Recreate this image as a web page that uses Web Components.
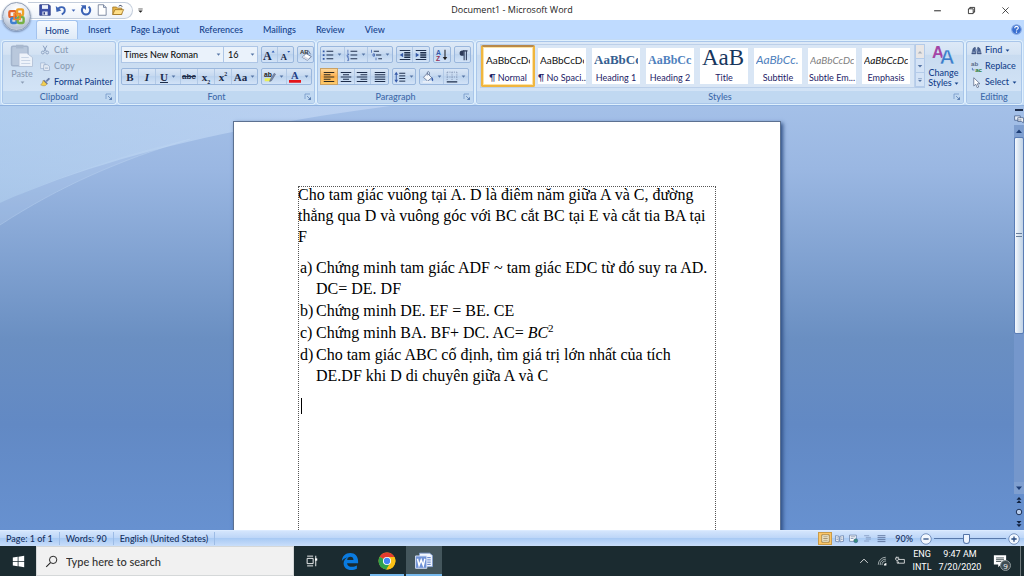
<!DOCTYPE html>
<html lang="en">
<head>
<meta charset="utf-8">
<meta name="viewport" content="width=device-width, initial-scale=1">
<title>Document1 - Microsoft Word</title>
<style>
html, body { margin: 0; height: 100%; }
body { font-family: Lato, "Open Sans", sans-serif; font-size: 9px; font-weight: 500; color: #15428b; overflow: hidden; }
</style>
</head>
<body>
<word-app></word-app>
<script>
const define = (name, html, setup) => {
  const tpl = document.createElement('template');
  tpl.innerHTML = '<style>*{box-sizing:border-box}button,select,input{font:inherit;color:inherit;margin:0}</style>' + html;
  customElements.define(name, class extends HTMLElement {
    constructor() {
      super();
      this.attachShadow({ mode: 'open' }).append(tpl.content.cloneNode(true));
    }
    connectedCallback() { if (setup) setup(this, this.shadowRoot); }
  });
};

/* ---------- icon set, every drawing on a 16 unit grid ---------- */
const lines = (ys, x1, x2, c = '#1c2c4a', w = 1.3) => ys.map((y, i) =>
  `<path d="M${Array.isArray(x1) ? x1[i] : x1} ${y}H${Array.isArray(x2) ? x2[i] : x2}" stroke="${c}" stroke-width="${w}"/>`).join('');
const ICONS = {
  save: '<path d="M1 1h12.500L15 2.500V15H1z" fill="#3f51a8" stroke="#27357c"/><path d="M4 1.500h8v5H4z" fill="#eef2fb"/><path d="M4.500 10h7v5h-7z" fill="#dfe4f2"/><path d="M6 11h2v3H6z" fill="#27357c"/>',
  undo: '<path d="M3.500 8C5 3.500 12 2.500 13 7.500c.6 3-1.500 5-4 6.500" fill="none" stroke="#3c63b5" stroke-width="2.400"/><path d="M1 2.500l1 8 6.500-2z" fill="#3c63b5"/>',
  redo: '<path d="M5 3.500C.5 7 2.500 14 8 14s7.500-7 3.500-10.500" fill="none" stroke="#3c63b5" stroke-width="2.600"/><path d="M1 1.500h7V8z" fill="#3c63b5"/>',
  page: '<path d="M3 1h7l3.500 3.500V15H3z" fill="#fff" stroke="#5c6b88"/><path d="M10 1v3.500h3.500" fill="#d5deee" stroke="#5c6b88"/>',
  open: '<path d="M1 4h5l1.500 1.500H13V14H1z" fill="#e8b64a" stroke="#9a6f1f"/><path d="M1 14l3-6.500h11.500L12.500 14z" fill="#ffe08a" stroke="#9a6f1f"/><path d="M9 3c2-2 4-1 4.500.5" fill="none" stroke="#35415f" stroke-width="1.300"/>',
  paste: '<rect x="1" y="1.500" width="11" height="13" rx="1" fill="#b9c8dc" stroke="#a3b4cc"/><rect x="4" y=".5" width="5" height="2.500" fill="#a9b9cf"/><path d="M6 6h5l4 3v6H6z" fill="#eef3fa" stroke="#b3c2d8" stroke-width=".6"/><path d="M7.500 9h5M7.500 11h6M7.500 13h6" stroke="#c9d5e6" stroke-width=".7"/>',
  cut: '<path d="M5 1l5 9M11 1L6.500 10" stroke="#8ba0c0" stroke-width="1.600"/><circle cx="4.500" cy="12" r="2.300" fill="none" stroke="#8ba0c0" stroke-width="1.500"/><circle cx="11.500" cy="12" r="2.300" fill="none" stroke="#8ba0c0" stroke-width="1.500"/>',
  copy: '<path d="M1 3h7v9H1z" fill="#e3ebf6" stroke="#9bafcb"/><path d="M6 6h6l3 3v6H6z" fill="#eef3fa" stroke="#8399ba"/><path d="M8 10h5M8 12h5" stroke="#9bafcb"/>',
  painter: '<path d="M9.500 6L14 1.500l1.500 1.500L11 7.500z" fill="#6b7fae" stroke="#3a4a75" stroke-width=".6"/><path d="M6.500 4.500l6 6-1.500 1.500-6-6z" fill="#5b6da3"/><path d="M5 5.500l6 6c-2 3-6 3.500-10 1 2.500-1 3-4 4-7z" fill="#f2cf52" stroke="#a27a1c" stroke-width=".7"/>',
  grow: '<text x="0" y="14" font-family="Liberation Serif" font-weight="bold" font-size="16" fill="#1c2c4a">A</text><path d="M11.500 4.500L13.500 2l2 2.500z" fill="#2c5bb5"/>',
  shrink: '<text x="2" y="14" font-family="Liberation Serif" font-weight="bold" font-size="12" fill="#1c2c4a">A</text><path d="M11 2.500h4L13 5z" fill="#2c5bb5"/>',
  clear: '<text x="0" y="7" font-family="Liberation Sans" font-weight="bold" font-size="8" fill="#333">AB</text><path d="M3 11l5-5 7 4-5 5z" fill="#fff" stroke="#4a5b80"/><path d="M3 11l2-2 7 4-2 2z" fill="#d7dbe8"/><path d="M11 2l3 5" stroke="#4a5b80"/>',
  marker: '<text x="0" y="8" font-family="Liberation Sans" font-weight="bold" font-size="9" fill="#222">ab</text><path d="M1 9.500h8v4H1z" fill="#e9ee55"/><path d="M8 12l5.500-9 2 1.200L10 13l-2.500 1z" fill="#7c8aa8" stroke="#3c4869" stroke-width=".5"/>',
  fontcolor: '<text x="2.500" y="11" font-family="Liberation Serif" font-weight="bold" font-size="14" fill="#1f3f86">A</text><path d="M0 12h16v3.500H0z" fill="#e3151b"/>',
  bullets: lines([3, 8, 13], 6, 15) + '<path d="M1 2h2.400v2.400H1zM1 7h2.400v2.400H1zM1 12h2.400v2.400H1z" fill="#3559a8"/>',
  numbers: lines([3, 8, 13], 6, 15) + '<path d="M2.500 1v4M1.500 6.500h2v1.500h-2v2h2M1.500 11.500h2v4h-2M2 13.500h1.500" fill="none" stroke="#3559a8" stroke-width=".9"/>',
  multi: lines([3, 8, 13], [5, 8, 11], [12, 15, 16]) + '<path d="M2 1v4M4 6.500h2v3H4zM8 11.500v3.500" fill="none" stroke="#3559a8"/>',
  outdent: lines([2, 14], 1, 15) + lines([5, 8, 11], 7, 15, '#1c2c4a', 1.7) + '<path d="M5.500 5v6L1 8z" fill="#3559a8"/>',
  indent: lines([2, 14], 1, 15) + lines([5, 8, 11], 7, 15, '#1c2c4a', 1.7) + '<path d="M1 5v6l4.500-3z" fill="#3559a8"/>',
  sort: '<text x="0" y="7.500" font-family="Liberation Sans" font-weight="bold" font-size="9" fill="#3559a8">A</text><text x="0" y="16" font-family="Liberation Sans" font-weight="bold" font-size="9" fill="#963055">Z</text><path d="M12 1v12" stroke="#222" stroke-width="1.400"/><path d="M9 10.500h6L12 15z" fill="#222"/>',
  pilcrow: '<path d="M8 2.500h6M9.500 2.500V15M12.500 2.500V15" stroke="#2c3a58" stroke-width="1.400" fill="none"/><path d="M9 2H7a3.500 3.500 0 0 0 0 7h2z" fill="#2c3a58"/>',
  left: lines([2, 5, 8, 11, 14], 1, [15, 10, 15, 10, 15], '#2d2a20', 1.6),
  center: lines([2, 5, 8, 11, 14], [1, 4, 1, 4, 1], [15, 12, 15, 12, 15], '#1c2c4a', 1.6),
  right: lines([2, 5, 8, 11, 14], [1, 6, 1, 6, 1], 15, '#1c2c4a', 1.6),
  justify: lines([2, 5, 8, 11, 14], 1, 15, '#1c2c4a', 1.6),
  spacing: lines([3, 6.500, 10, 13.500], 7, 15, '#1c2c4a', 1.3) + '<path d="M3 4v9" stroke="#3559a8" stroke-width="1.300"/><path d="M.5 5L3 1l2.500 4zM.5 11.500L3 15.500l2.500-4z" fill="#3559a8"/>',
  bucket: '<path d="M7 3l6 6-5.500 4.500L2 8.500z" fill="#f4f7fc" stroke="#57688c"/><path d="M7 6V2.500C7 0 10 0 10 3v2" fill="none" stroke="#57688c"/><path d="M13 8c2 2 2.500 4 1.500 5.500-2-.5-2-3-1.500-5.500z" fill="#3559a8"/><path d="M1 14.500h12" stroke="#e9eff8" stroke-width="2.500"/>',
  borders: '<path d="M1.500 1.500h13M1.500 8h13M1.500 1.500v12M8 1.500v12M14.500 1.500v12" stroke="#7587a8" stroke-dasharray="1.500 1.500" fill="none"/><path d="M1 14.500h14" stroke="#1c2c4a" stroke-width="1.500"/>',
  styles: '<text x="0" y="9" font-family="Liberation Sans" font-weight="bold" font-size="11" fill="#a445a6">A</text><text x="5" y="13" font-family="Liberation Sans" font-weight="bold" font-size="14" fill="#3d7cc9" stroke="#dcebfb" stroke-width=".3">A</text>',
  find: '<path d="M1 13l2-8 3-2 1 4v6zM15 13l-2-8-3-2-1 4v6z" fill="#49618f" stroke="#2c406b" stroke-width=".6"/><path d="M6.500 6h3v3h-3z" fill="#8ea4cb"/><path d="M2 10.500h4M10 10.500h4" stroke="#b7c7e4"/>',
  replace: '<text x="0" y="7" font-family="Liberation Sans" font-size="9" font-weight="bold" fill="#5a6a88">ab</text><text x="6" y="15.500" font-family="Liberation Sans" font-size="9" font-weight="bold" fill="#2c7a35">ac</text><path d="M2 10v3h3" fill="none" stroke="#3559a8"/>',
  select: '<path d="M4 1v12l3-2.500 2 5 2.200-1-2-4.700h3.800z" fill="#fff" stroke="#4c5b7a"/>',
  help: '<circle cx="8" cy="8" r="7" fill="#3a6fd0" stroke="#86a9e3" stroke-width="1.500"/><path d="M5.500 6c0-3.500 5.500-3 5 0-.3 1.500-2.500 1.500-2.500 3.500M8 11v1.800" fill="none" stroke="#fff" stroke-width="1.700"/>',
  launcher: '<path d="M2 12V2h10" fill="none" stroke="#6f93c6" stroke-width="1.500"/><path d="M6 6l6 6" stroke="#5d80b3" stroke-width="1.500"/><path d="M14 7.500V14H7.500z" fill="#5d80b3"/>',
  drop: '<path d="M2 5h12l-6 7z" fill="currentColor"/>',
  up: '<path d="M2 12h12L8 5z" fill="currentColor"/>',
  more: '<path d="M3 4.500h10" stroke="currentColor" stroke-width="1.500"/><path d="M3 8h10l-5 5z" fill="currentColor"/>',
  min: '<path d="M2 8.500h12" stroke="#111" stroke-width="1.600"/>',
  restore: '<path d="M2.500 5h8.500v8.500H2.500zM5 5V2.500h8.500V11H11" fill="none" stroke="#111" stroke-width="1.400"/>',
  close: '<path d="M2.500 2.500l11 11M13.500 2.500l-11 11" stroke="#111" stroke-width="1.300"/>',
  ruler: '<path d="M1 3h9v7H1z" fill="#e6eefa" stroke="#28426f"/><path d="M6 6h9v8l-3-2H6z" fill="#fff" stroke="#28426f"/><path d="M8 8v3M11 8v3" stroke="#28426f"/>',
  pgup: '<path d="M3 7.500h10L8 2zM3 14h10L8 8.500z" fill="#10203c"/>',
  pgdn: '<path d="M3 2h10L8 7.500zM3 8.500h10L8 14z" fill="#10203c"/>',
  ball: '<circle cx="8" cy="8" r="5.500" fill="#b9cdec" stroke="#1d3156" stroke-width="2"/>',
  vprint: '<path d="M1.500 1.500h13v13h-13z" fill="#fff7d8" stroke="#5b4a2a"/><path d="M4 5h8M4 8h8M4 11h8" stroke="#5b4a2a"/>',
  vread: '<path d="M1 3l6 1v10l-6-1zM15 3L9 4v10l6-1z" fill="#fff" stroke="#3b5585"/><path d="M2.500 7h3M2.500 10h3M10.500 7h3M10.500 10h3" stroke="#3b5585"/>',
  vweb: '<path d="M1 2h12v11H1z" fill="#fff" stroke="#3b5585"/><path d="M3 5h8M3 8h5" stroke="#3b5585"/><circle cx="12" cy="12" r="3.500" fill="#3c8f7a" stroke="#2b5c8f"/>',
  voutline: '<path d="M2 3h9M5 6h9M5 9h9M2 12.500h9" stroke="#7d93ba" stroke-width="1.300"/>',
  vdraft: '<path d="M1 3h14M1 6.500h14M1 10h14M1 13.500h14" stroke="#4c628c" stroke-width="1.400"/>',
  minus: '<circle cx="8" cy="8" r="7" fill="#f3f8ff" stroke="#5676a9"/><path d="M4.500 8h7" stroke="#27487f" stroke-width="1.700"/>',
  plus: '<circle cx="8" cy="8" r="7" fill="#f3f8ff" stroke="#5676a9"/><path d="M4.500 8h7M8 4.500v7" stroke="#27487f" stroke-width="1.700"/>',
  win: '<path d="M1 3.200l6-.9v5.300H1zM8 2.200L15 1v6.600H8zM1 8.500h6v5.300l-6-.9zM8 8.500h7V15l-7-1.100z" fill="#fff"/>',
  search: '<circle cx="10" cy="6" r="4.500" fill="none" stroke="#222" stroke-width="1.200"/><path d="M6.800 9.300L1.500 14.500" stroke="#222" stroke-width="1.300"/>',
  taskview: '<path d="M1.500 4.500h8v7h-8zM1.500 1.500h8M1.500 14.500h8M13 1v14" fill="none" stroke="#fff" stroke-width="1.200"/><path d="M12 4.500h3v3h-3z" fill="#fff"/>',
  edge: '<path d="M.8 8C1 3.500 4 .8 8.200.8c4.300 0 7 3 7 7.500v1.700H5.400c.2 2.300 2 3.200 4.300 3.200 1.700 0 3.200-.5 4.400-1.200v2.900c-1.400.8-3.100 1.200-5 1.200-4 0-6.800-2.200-6.800-6 0-2.500 1.500-4.600 3.900-5.500C4.200 5 2 5.800.8 8zm4.700-.8h5.600c0-1.800-1-2.900-2.700-2.900-1.600 0-2.700 1-2.900 2.900z" fill="#0a7be0"/>',
  chrome: '<circle cx="8" cy="8" r="7.500" fill="#fbc116"/><path d="M8 8L1.500 4.250A7.500 7.500 0 0 1 14.500 4.250L14.500 4.500H8z" fill="#e33b2e"/><path d="M8 8L1.500 4.250A7.500 7.500 0 0 0 7.400 15.500L11 9.700z" fill="#2fa24c"/><path d="M8 4.500h6.600A7.500 7.500 0 0 1 7.400 15.500L11 9.700z" fill="#fbc116"/><circle cx="8" cy="8" r="3.600" fill="#fff"/><circle cx="8" cy="8" r="2.800" fill="#4285f4"/>',
  word: '<path d="M4 1h9l2.500 2V13H4z" fill="#f2f6fd" stroke="#7f9fd6" stroke-width=".7"/><path d="M10 5h4M10 7h4M10 9h4M10 11h4" stroke="#4a6fc0" stroke-width=".8"/><path d="M.5 3.500h10v11H.5z" fill="#6f92d6" stroke="#dce7fb" stroke-width=".8"/><path d="M2.200 6l1.400 6L5.500 7l1.900 5 1.400-6" fill="none" stroke="#fff" stroke-width="1.300"/>',
  chevron: '<path d="M2 11l6-6 6 6" fill="none" stroke="#fff" stroke-width="1.300"/>',
  wifi: '<path d="M2 14A12 12 0 0 1 14 2M5 14.500A9 9 0 0 1 14.500 5M8 14.500A6.500 6.500 0 0 1 14.500 8" fill="none" stroke="#c8d0d2" stroke-width="1.200"/><path d="M11 15a4 4 0 0 1 4-4v4z" fill="#fff"/>',
  power: '<path d="M5.500 5.500H15v6H5.500V9" fill="none" stroke="#fff" stroke-width="1.200"/><path d="M1 3h5v2.500c0 2-5 2-5 0zM2.300 1v2M4.700 1v2M3.500 7v4.500h2" fill="none" stroke="#fff" stroke-width="1.100"/>',
  notes: '<path d="M1 1.500h14v10.500H9l-3 3v-3H1z" fill="#fff"/><path d="M3.500 4.500h9M3.500 6.500h9M3.500 8.500h6" stroke="#1b2b30" stroke-width=".9"/>',
  office: '<g fill="none" stroke-width="2"><rect x="2" y="3.500" width="5.500" height="5" rx="1" stroke="#e3632a"/><rect x="8.500" y="2" width="5" height="5" rx="1" stroke="#eba22b"/><rect x="3.500" y="9.500" width="4.500" height="4" rx="1" stroke="#3f7fd0"/><rect x="9" y="8.500" width="5" height="5" rx="1" stroke="#76b043"/></g><path d="M6 5.500h5v5H6z" fill="none" stroke="#f0872e" stroke-width="1.400"/>'
};

define('ms-icon', '<style>:host{display:block;flex:none;width:var(--s,12px);height:var(--s,12px)}svg{display:block;width:100%;height:100%;overflow:visible}</style><svg viewBox="0 0 16 16" aria-hidden="true"></svg>',
  (el, root) => { root.querySelector('svg').innerHTML = ICONS[el.getAttribute('name')] || ''; });

/* ---------- ribbon parts ---------- */
define('tool-strip', `<style>
:host{display:flex;flex:none;height:17px;border:1px solid #9ab7dd;border-radius:2px;background:linear-gradient(#d9e6f6,#c6d9f0 45%,#bcd3ee 50%,#d3e3f7)}
::slotted(*:not(:last-child)){border-right:1px solid #b2c9e6}
</style><slot></slot>`);

define('tool-button', `<style>
:host{display:block;flex:1 1 17px;min-width:0;--s:12px}
:host([drop]){flex-grow:1;flex-basis:25px}
button{display:flex;align-items:center;justify-content:center;width:100%;height:100%;padding:0;border:0;background:none;color:#1c2c4a;white-space:nowrap}
:host([on]) button{background:linear-gradient(#fdd79a,#fdb14f 50%,#fecb6b);box-shadow:0 0 0 1px #c9a165}
.d{--s:5px;color:#5575a5;margin-left:3px}
:host(:not([drop])) .d{display:none}
</style><button type="button"><slot></slot><ms-icon hidden></ms-icon><ms-icon class="d" name="drop"></ms-icon></button>`,
  (el, root) => {
    root.querySelector('button').setAttribute('aria-label', el.getAttribute('label'));
    const name = el.getAttribute('icon'), ic = root.querySelector('ms-icon');
    if (name) ic.setAttribute('name', name); else ic.remove();
    if (name) ic.shadowRoot.querySelector('svg').innerHTML = ICONS[name];
    ic.hidden = false;
  });

define('ribbon-group', `<style>
:host{display:flex;flex-direction:column;border:1px solid #a9c6ea;border-radius:3px;background:linear-gradient(#dde9f7,#d3e2f3 20%,#c8dbf0 22%,#d6e6f8);box-shadow:0 0 0 1px #dff0fd;overflow:hidden;min-width:0}
.body{flex:1;display:flex;min-height:0}
footer{display:flex;align-items:center;justify-content:center;height:12px;background:#c0d8f1;color:#3e6aaa;line-height:12px;position:relative}
button{position:absolute;right:2px;top:2px;padding:0;border:0;background:none;--s:8px}
:host([plain]) button{display:none}
</style><div class="body"><slot></slot></div><footer><span></span><button type="button" aria-label="More options"><ms-icon name="launcher"></ms-icon></button></footer>`,
  (el, root) => { root.querySelector('span').textContent = el.getAttribute('label'); });

define('style-card', `<style>
:host{display:block;flex:none;width:54px;height:42px;padding:3px}
button{display:flex;flex-direction:column;align-items:stretch;width:100%;height:100%;padding:0;border:0;background:#fff;overflow:hidden}
:host([on]){border:2px solid #f0b63f;border-top-color:#b8884a;border-radius:2px;background:#fde3a6;padding:1px}
.sample{height:24px;line-height:24px;margin:0 2px;overflow:hidden;white-space:nowrap;text-align:left;font:var(--font);color:var(--ink,#111)}
.name{height:12px;line-height:12px;font-weight:400;color:#1c2266;white-space:nowrap;text-align:center}
</style><button type="button"><span class="sample"></span><span class="name"></span></button>`,
  (el, root) => {
    root.querySelector('.sample').textContent = el.getAttribute('sample');
    root.querySelector('.name').textContent = el.getAttribute('name');
  });

define('clipboard-tools', `<style>
:host{display:flex;flex:1;align-items:stretch;padding:0 3px}
button{display:flex;align-items:center;padding:0;border:0;background:none;line-height:16px;white-space:nowrap}
.paste{flex-direction:column;width:32px;--s:24px;color:#8c9db6;line-height:12px;padding-top:2px}
.paste .d{--s:5px}
.list{display:flex;flex-direction:column;gap:0;margin-left:2px}
.list button{gap:4px;--s:10px}
.off{color:#8c9db6}
</style><button type="button" class="paste"><ms-icon name="paste"></ms-icon>Paste<ms-icon class="d" name="drop"></ms-icon></button>
<div class="list"><button type="button" class="off"><ms-icon name="cut"></ms-icon>Cut</button>
<button type="button" class="off"><ms-icon name="copy"></ms-icon>Copy</button>
<button type="button"><ms-icon name="painter"></ms-icon>Format Painter</button></div>`);

const ROWS = ':host{display:flex;flex:1;flex-direction:column;gap:5px;padding:4px 2px 0}.row{display:flex;gap:3px}';

define('font-tools', `<style>${ROWS}
.boxes{display:flex;flex:none;width:137px}
label{position:relative;display:flex;height:17px}
label ms-icon{position:absolute;right:3px;top:6px;--s:5px;color:#5575a5}
.f{flex:1}.z{width:34px}
select{appearance:none;width:100%;height:17px;padding:0 2px;border:1px solid #aec6e6;border-radius:0;background:#eaf2fb;color:#111;line-height:15px}
.z select{border-left:0;padding-left:4px}
b,i,u,s{font-family:"Liberation Serif",serif;font-size:11px}
i{font-weight:bold} s{font:bold 8px/12px "Liberation Sans",sans-serif} u{font-weight:bold}
sub,sup{font-size:6px;line-height:0}
</style>
<div class="row"><div class="boxes">
<label class="f"><select aria-label="Font"><option>Times New Roman</option></select><ms-icon name="drop"></ms-icon></label>
<label class="z"><select aria-label="Font size"><option>16</option></select><ms-icon name="drop"></ms-icon></label></div>
<tool-strip style="width:33px"><tool-button icon="grow" label="Grow Font"></tool-button><tool-button icon="shrink" label="Shrink Font"></tool-button></tool-strip>
<tool-strip style="width:17px"><tool-button icon="clear" label="Clear Formatting"></tool-button></tool-strip></div>
<div class="row"><tool-strip style="width:137px">
<tool-button label="Bold"><b>B</b></tool-button><tool-button label="Italic"><i>I</i></tool-button><tool-button drop label="Underline"><u>U</u></tool-button>
<tool-button label="Strikethrough"><s>abc</s></tool-button><tool-button label="Subscript"><b>x<sub>2</sub></b></tool-button><tool-button label="Superscript"><b>x<sup>2</sup></b></tool-button>
<tool-button drop label="Change Case"><b>Aa</b></tool-button></tool-strip>
<tool-strip style="width:51px"><tool-button drop icon="marker" label="Highlight"></tool-button><tool-button drop icon="fontcolor" label="Font Color"></tool-button></tool-strip></div>`);

define('paragraph-tools', `<style>${ROWS}</style>
<div class="row"><tool-strip style="width:73px"><tool-button drop icon="bullets" label="Bullets"></tool-button><tool-button drop icon="numbers" label="Numbering"></tool-button><tool-button drop icon="multi" label="Multilevel List"></tool-button></tool-strip>
<tool-strip style="width:34px"><tool-button icon="outdent" label="Decrease Indent"></tool-button><tool-button icon="indent" label="Increase Indent"></tool-button></tool-strip>
<tool-strip style="width:18px"><tool-button icon="sort" label="Sort"></tool-button></tool-strip>
<tool-strip style="width:17px"><tool-button icon="pilcrow" label="Show marks"></tool-button></tool-strip></div>
<div class="row"><tool-strip style="width:69px"><tool-button on icon="left" label="Align Left"></tool-button><tool-button icon="center" label="Center"></tool-button><tool-button icon="right" label="Align Right"></tool-button><tool-button icon="justify" label="Justify"></tool-button></tool-strip>
<tool-strip style="width:24px"><tool-button drop icon="spacing" label="Line Spacing"></tool-button></tool-strip>
<tool-strip style="width:50px"><tool-button drop icon="bucket" label="Shading"></tool-button><tool-button drop icon="borders" label="Borders"></tool-button></tool-strip></div>`);

define('style-tools', `<style>
:host{display:flex;flex:1;padding:2px 1px 2px 3px;min-width:0}
.gallery{display:flex;flex:1;min-width:0;overflow:hidden;height:44px;border:1px solid #bcd0ea;background:#d9e6f5}
.scroll{display:flex;flex-direction:column;width:10px;height:44px;border:1px solid #b4cbe9}
.scroll button{flex:1;display:flex;align-items:center;justify-content:center;padding:0;border:0;border-bottom:1px solid #b4cbe9;background:#d4e3f6;--s:6px;color:#5575a5}
.scroll .off{background:#e8e6e6;color:#a9b1bd}
.change{display:flex;flex-direction:column;align-items:center;width:37px;padding:0;border:0;background:none;--s:24px;line-height:10px}
.change span{display:flex;align-items:center;gap:2px}.change span ms-icon{--s:5px}
</style>
<div class="gallery">
<style-card on sample="AaBbCcDc" name="¶ Normal" style="--font:10px/24px Lato,sans-serif"></style-card>
<style-card sample="AaBbCcDc" name="¶ No Spaci..." style="--font:10px/24px Lato,sans-serif"></style-card>
<style-card sample="AaBbCc" name="Heading 1" style="--font:bold 13px/24px 'Liberation Serif',serif;--ink:#365f91"></style-card>
<style-card sample="AaBbCc" name="Heading 2" style="--font:bold 12px/24px 'Liberation Serif',serif;--ink:#4f81bd"></style-card>
<style-card sample="AaB" name="Title" style="--font:23px/20px 'Liberation Serif',serif;--ink:#17365d"></style-card>
<style-card sample="AaBbCc." name="Subtitle" style="--font:italic 12px/24px Lato,sans-serif;--ink:#4f81bd"></style-card>
<style-card sample="AaBbCcDc" name="Subtle Em..." style="--font:italic 10px/24px Lato,sans-serif;--ink:#808080"></style-card>
<style-card sample="AaBbCcDc" name="Emphasis" style="--font:italic 10px/24px Lato,sans-serif"></style-card>
</div>
<div class="scroll"><button type="button" class="off" aria-label="Row up"><ms-icon name="up"></ms-icon></button><button type="button" aria-label="Row down"><ms-icon name="drop"></ms-icon></button><button type="button" aria-label="More styles"><ms-icon name="more"></ms-icon></button></div>
<button type="button" class="change"><ms-icon name="styles"></ms-icon>Change<span>Styles<ms-icon name="drop"></ms-icon></span></button>`);

define('editing-tools', `<style>
:host{display:flex;flex:1;flex-direction:column;padding:0 4px}
button{display:flex;align-items:center;gap:3px;padding:0;border:0;background:none;line-height:16px;--s:11px}
.d{--s:5px}
</style><button type="button"><ms-icon name="find"></ms-icon>Find<ms-icon class="d" name="drop"></ms-icon></button>
<button type="button"><ms-icon name="replace"></ms-icon>Replace</button>
<button type="button"><ms-icon name="select"></ms-icon>Select<ms-icon class="d" name="drop"></ms-icon></button>`);

/* ---------- window frame ---------- */
define('title-bar', `<style>
:host{display:grid;grid-template-columns:1fr auto 1fr;align-items:center;height:20px;background:#fff;color:#222}
button{display:flex;align-items:center;justify-content:center;padding:0;border:0;background:none}
.quick{display:flex;align-items:center;margin-left:28px}
.pill{display:flex;align-items:center;width:105px;height:17px;padding-left:11px;gap:4px;border:1px solid #c3cddb;border-left:0;border-radius:0 9px 9px 0;background:linear-gradient(#fff,#eef3fa)}
.pill .d{--s:5px;color:#3c63b5}
.quick>.more{--s:7px;margin-left:4px;color:#222}
.win{display:flex;justify-content:flex-end;padding-right:2px}
.win button{width:34px;height:20px;--s:9px}
h1{margin:0;font:9px/20px "Open Sans",sans-serif}
</style><div class="quick"><div class="pill">
<button type="button" aria-label="Save"><ms-icon name="save"></ms-icon></button>
<button type="button" aria-label="Undo"><ms-icon name="undo"></ms-icon></button><ms-icon class="d" name="drop"></ms-icon>
<button type="button" aria-label="Repeat"><ms-icon name="redo"></ms-icon></button>
<button type="button" aria-label="New"><ms-icon name="page"></ms-icon></button>
<button type="button" aria-label="Open"><ms-icon name="open"></ms-icon></button></div>
<button type="button" class="more" aria-label="Customize"><ms-icon name="more"></ms-icon></button></div>
<h1>Document1 - Microsoft Word</h1>
<div class="win"><button type="button" aria-label="Minimize"><ms-icon name="min"></ms-icon></button><button type="button" aria-label="Restore"><ms-icon name="restore"></ms-icon></button><button type="button" aria-label="Close"><ms-icon name="close"></ms-icon></button></div>`);

define('ribbon-tabs', `<style>
:host{display:flex;align-items:stretch;height:19px;background:#bfdbff;padding-left:36px}
nav{display:flex}
a{display:flex;align-items:center;padding:0 10px;color:#15428b;text-decoration:none;white-space:nowrap}
a.on{padding:0 8px;border:1px solid #a3c3ee;border-bottom:0;border-radius:3px 3px 0 0;background:linear-gradient(#f4f9ff,#dfeaf7)}
button{margin:0 2px 0 auto;padding:0;border:0;background:none;--s:11px}
</style><nav><a href="#home" class="on">Home</a><a href="#insert">Insert</a><a href="#layout">Page Layout</a><a href="#references">References</a><a href="#mailings">Mailings</a><a href="#review">Review</a><a href="#view">View</a></nav>
<button type="button" aria-label="Help"><ms-icon name="help"></ms-icon></button>`);

define('office-button', `<style>
:host{position:absolute;left:2px;top:2px}
button{display:flex;align-items:center;justify-content:center;width:29px;height:29px;padding:0;border:1px solid #8e9cb3;border-radius:50%;background:radial-gradient(circle at 50% 25%,#fff,#e4e9f1 45%,#b6c2d4 75%,#eaf0f8);box-shadow:0 1px 2px #7085a8;--s:19px}
</style><button type="button" aria-label="Office Button"><ms-icon name="office"></ms-icon></button>`);

define('ribbon-panel', `<style>
:host{display:flex;gap:2px;height:67px;padding:2px 2px 1px;background:#c3dbf6;border-bottom:1px solid #8fb2e0}
.c{flex:0 0 114px}.f{flex:0 0 197px}.p{flex:0 0 157px}.s{flex:1}.e{flex:0 0 56px}
</style>
<ribbon-group class="c" label="Clipboard"><clipboard-tools></clipboard-tools></ribbon-group>
<ribbon-group class="f" label="Font"><font-tools></font-tools></ribbon-group>
<ribbon-group class="p" label="Paragraph"><paragraph-tools></paragraph-tools></ribbon-group>
<ribbon-group class="s" label="Styles"><style-tools></style-tools></ribbon-group>
<ribbon-group class="e" label="Editing" plain><editing-tools></editing-tools></ribbon-group>`);

/* ---------- document ---------- */
define('doc-page', `<style>
:host{display:block;width:548px;max-width:100%;min-height:700px;padding:62px 64px;background:#fff;border:1px solid #5c7191;box-shadow:2px 2px 4px #2f4f85;color:#000;font-family:"Liberation Serif",serif;font-weight:400;font-size:16px;line-height:21px}
.area{position:relative;min-height:500px}
/* text boundary guide, laid over the margins of the text */
.area::before{content:"";position:absolute;inset:2px 0 0;border:1px dotted #555;pointer-events:none}
p,ol{margin:0}
ol{padding:10px 0 0 18px;list-style:none;counter-reset:n}
li{counter-increment:n;margin-bottom:1px;position:relative;white-space:nowrap}
li::before{content:counter(n,lower-alpha) ")";position:absolute;left:-16px}
sup{font-size:11px;line-height:0}
.caret{width:1px;height:16px;margin:12px 0 0 3px;background:#000}
</style><div class="area">
<p>Cho tam giác vuông tại A. D là điêm năm giữa A và C, đường<br>thẳng qua D và vuông góc với BC cắt BC tại E và cắt tia BA tại<br>F</p>
<ol><li>Chứng minh tam giác ADF ~ tam giác EDC từ đó suy ra AD.<br>DC= DE. DF</li>
<li>Chứng minh DE. EF = BE. CE</li>
<li>Chứng minh BA. BF+ DC. AC= <i>BC</i><sup>2</sup></li>
<li>Cho tam giác ABC cố định, tìm giá trị lớn nhất của tích<br>DE.DF khi D di chuyên giữa A và C</li></ol>
<div class="caret"></div></div>`);

define('scroll-rail', `<style>
:host{display:flex;flex:none;flex-direction:column;align-items:center;width:10px;padding-top:3px;--s:8px}
button{display:flex;align-items:center;justify-content:center;flex:none;width:10px;height:12px;padding:0;border:0;background:none;color:#1c3c74}
.split{width:8px;height:2px;background:#1c2c4a;margin-bottom:2px}
.arrow{background:#7f9fd0}
.track{flex:1;width:10px;background:#7597cc;display:flex;flex-direction:column}
.thumb{height:57%;border:1px solid #5a7db5;border-radius:2px;background:linear-gradient(90deg,#f4f8fd,#dbe6f2 45%,#c0d2e6);display:flex;flex-direction:column;align-items:center;justify-content:center}
.thumb span{width:6px;height:4px;border:solid #6a7f9c;border-width:1px 0}
</style><div class="split"></div><button type="button" aria-label="Ruler" style="--s:10px"><ms-icon name="ruler"></ms-icon></button>
<button type="button" class="arrow" aria-label="Scroll up"><ms-icon name="up"></ms-icon></button>
<div class="track"><div class="thumb"><span></span></div></div>
<button type="button" class="arrow" aria-label="Scroll down"><ms-icon name="drop"></ms-icon></button>
<button type="button" aria-label="Previous page"><ms-icon name="pgup"></ms-icon></button>
<button type="button" aria-label="Browse object"><ms-icon name="ball"></ms-icon></button>
<button type="button" aria-label="Next page"><ms-icon name="pgdn"></ms-icon></button>`);

define('doc-canvas', `<style>
:host{display:flex;flex:1;min-height:0;overflow:hidden;position:relative;background:linear-gradient(#a4c0e8,#9ab7e2 15%,#6a8fc2 55%,#6289c4 75%,#6791d0)}
svg{position:absolute;left:0;top:0;width:400px;height:130px}
.view{flex:1;display:flex;justify-content:center;align-items:flex-start;padding-top:15px;overflow:hidden;position:relative}
scroll-rail{position:relative}
</style><svg viewBox="0 0 400 130" aria-hidden="true"><defs><linearGradient id="g" x1="0" x2="1"><stop offset="0" stop-color="#bcd9f4" stop-opacity=".55"/><stop offset="1" stop-color="#c6d8f5" stop-opacity=".7"/></linearGradient></defs>
<path d="M0 0H390C250 18 110 48 0 97z" fill="url(#g)"/><path d="M0 97C60 70 130 46 190 33C120 54 60 80 0 119z" fill="#c4daf4" opacity=".22"/><path d="M0 119C60 80 120 54 190 33" fill="none" stroke="#c4daf4" opacity=".35"/></svg>
<div class="view"><doc-page></doc-page></div><scroll-rail></scroll-rail>`);

/* ---------- bars at the bottom ---------- */
define('status-bar', `<style>
:host{display:flex;align-items:center;height:16px;border-top:1px solid #dcebff;background:linear-gradient(#d4e5fc,#bdd6f8 45%,#a9caf4 50%,#c9defa);color:#15305f}
span{padding:0 6px;border-right:1px solid #9dbce6;line-height:13px;white-space:nowrap}
.right{display:flex;align-items:center;margin-left:auto;padding-right:4px;gap:2px}
.views{display:flex}
button{display:flex;align-items:center;justify-content:center;width:14px;height:13px;padding:0;border:0;background:none;--s:9px}
.views .on{background:#fbc666;box-shadow:inset 0 0 0 1px #c99b4a}
.zoom{--s:12px;width:12px}
label{margin:0 5px}
input{appearance:none;width:72px;height:12px;background:linear-gradient(#5878aa,#5878aa) center/100% 1px no-repeat}
input::-webkit-slider-thumb{appearance:none;width:7px;height:10px;border:1px solid #5676a9;border-radius:1px 1px 4px 4px;background:#eef5ff}
</style><span>Page: 1 of 1</span><span>Words: 90</span><span>English (United States)</span>
<div class="right"><div class="views"><button type="button" class="on" aria-label="Print Layout"><ms-icon name="vprint"></ms-icon></button><button type="button" aria-label="Reading"><ms-icon name="vread"></ms-icon></button><button type="button" aria-label="Web Layout"><ms-icon name="vweb"></ms-icon></button><button type="button" aria-label="Outline"><ms-icon name="voutline"></ms-icon></button><button type="button" aria-label="Draft"><ms-icon name="vdraft"></ms-icon></button></div>
<label for="z">90%</label><button type="button" class="zoom" aria-label="Zoom out"><ms-icon name="minus"></ms-icon></button><input id="z" type="range" min="10" max="190" value="90"><button type="button" class="zoom" aria-label="Zoom in"><ms-icon name="plus"></ms-icon></button></div>`);

define('task-bar', `<style>
:host{display:flex;align-items:stretch;height:30px;background:#1b2b30;color:#fff}
button{display:flex;align-items:center;justify-content:center;width:36px;padding:0;border:0;background:none;--s:18px}
.start{--s:13px}
.find{display:flex;align-items:center;width:258px;padding-left:8px;gap:8px;background:#f1f1f1;border:1px solid #d5d8d9;color:#333;--s:13px}
input{flex:1;min-width:0;border:0;padding:0;background:none;font-size:11px;color:#333;outline:0}
input::placeholder{color:#333;opacity:1}
.apps{display:flex;gap:2px}
.open{border-bottom:2px solid #76b9ed;padding-top:2px;width:34px}
.active{background:#44565c;width:36px}
.tray{display:flex;align-items:center;margin-left:auto;line-height:13px;text-align:center;font-family:Roboto,sans-serif;font-weight:400;font-size:9px}
.tray button{width:18px;height:28px;--s:10px}
.lang{width:26px}.clock{width:50px}
.tray .note{position:relative;width:30px;--s:14px}
.note b{position:absolute;left:15px;top:13px;width:11px;height:11px;border-radius:50%;background:#3f4d52;border:1px solid #8c979a;font:8px/9px "Open Sans",sans-serif}
.peek{width:1px;height:30px;margin:0 3px 0 5px;background:#6d787b}
</style><button type="button" class="start" aria-label="Start"><ms-icon name="win"></ms-icon></button>
<label class="find"><ms-icon name="search"></ms-icon><input type="text" placeholder="Type here to search" aria-label="Search"></label>
<div class="apps"><button type="button" aria-label="Task View" style="--s:12px"><ms-icon name="taskview"></ms-icon></button><button type="button" aria-label="Edge"><ms-icon name="edge"></ms-icon></button><button type="button" class="open" aria-label="Chrome"><ms-icon name="chrome"></ms-icon></button><button type="button" class="open active" aria-label="Word"><ms-icon name="word"></ms-icon></button></div>
<div class="tray"><button type="button" aria-label="Hidden icons"><ms-icon name="chevron"></ms-icon></button><button type="button" aria-label="Network"><ms-icon name="wifi"></ms-icon></button><button type="button" aria-label="Power"><ms-icon name="power"></ms-icon></button>
<div class="lang">ENG<br>INTL</div><div class="clock">9:47 AM<br>7/20/2020</div>
<button type="button" class="note" aria-label="Notifications"><ms-icon name="notes"></ms-icon><b>9</b></button><div class="peek"></div></div>`);

define('word-app', `<style>
:host{display:flex;flex-direction:column;height:100vh;position:relative}
title-bar,ribbon-tabs,ribbon-panel,status-bar,task-bar{flex:none}
</style><title-bar></title-bar><ribbon-tabs></ribbon-tabs><ribbon-panel></ribbon-panel><doc-canvas></doc-canvas><status-bar></status-bar><task-bar></task-bar><office-button></office-button>`);
</script>
</body>
</html>
